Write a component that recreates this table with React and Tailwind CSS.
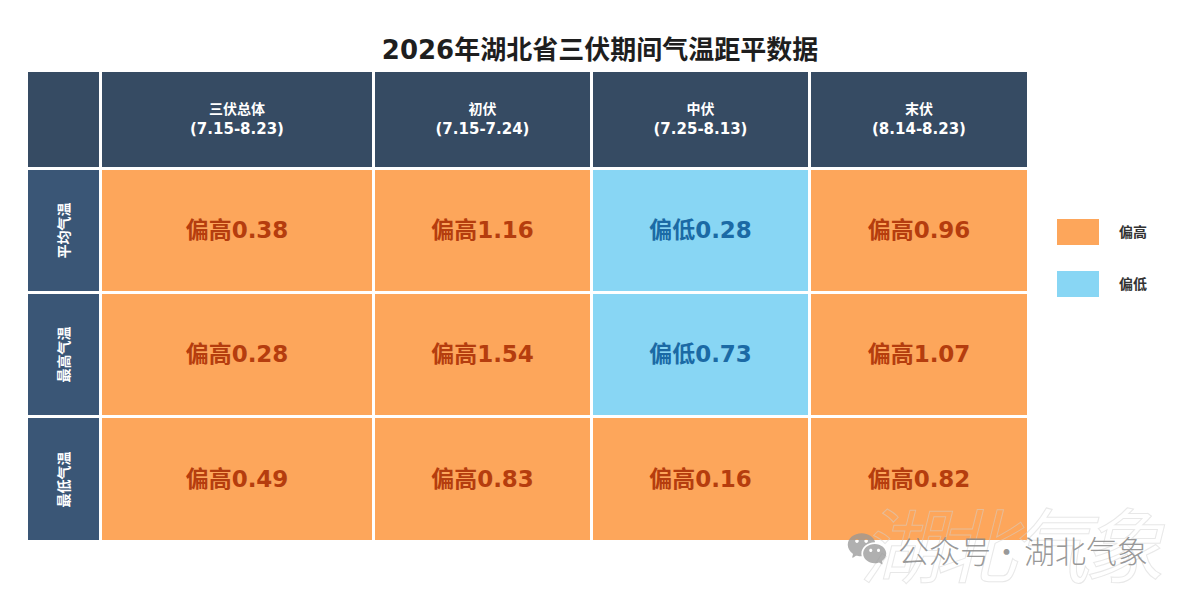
import React from "react";
import { RiWechatFill } from "react-icons/ri";

const columns = [
  { name: "三伏总体", range: "(7.15-8.23)" },
  { name: "初伏", range: "(7.15-7.24)" },
  { name: "中伏", range: "(7.25-8.13)" },
  { name: "末伏", range: "(8.14-8.23)" },
];

// high = 偏高, low = 偏低
const rows = [
  { label: "平均气温", cells: [["high", "0.38"], ["high", "1.16"], ["low", "0.28"], ["high", "0.96"]] },
  { label: "最高气温", cells: [["high", "0.28"], ["high", "1.54"], ["low", "0.73"], ["high", "1.07"]] },
  { label: "最低气温", cells: [["high", "0.49"], ["high", "0.83"], ["high", "0.16"], ["high", "0.82"]] },
];

const font = { fontFamily: '"DejaVu Sans", "Noto Sans CJK SC", sans-serif' };

const Cell = ({ kind, value }) => {
  const high = kind === "high";
  return (
    <div
      className={`flex items-center justify-center ${high ? "bg-[#fda65b]" : "bg-[#88d6f4]"}`}
    >
      <span
        className={`text-[23px] font-bold ${high ? "text-[#b53d0e]" : "text-[#1b6aa5]"}`}
      >
        {high ? "偏高" : "偏低"}
        {value}
      </span>
    </div>
  );
};

export default function App() {
  return (
    <div className="relative w-[1200px] h-[594px] bg-white overflow-hidden" style={font}>
      <h1 className="pt-[32px] h-[72px] text-center text-[26px] leading-[36px] font-bold text-[#1e1e1e]">
        2026年湖北省三伏期间气温距平数据
      </h1>

      <div className="flex pl-[28px]">
        {/* 表格 */}
        <div className="grid grid-cols-[71px_270px_215px_215px_216px] grid-rows-[95px_121px_121px_122px] gap-[3px]">
          <div className="bg-[#364b63]" />
          {columns.map((c) => (
            <div
              key={c.name}
              className="bg-[#364b63] flex flex-col items-center justify-center text-white font-bold"
            >
              <span className="text-[14px] leading-[19px]">{c.name}</span>
              <span className="text-[15px] leading-[20px]">{c.range}</span>
            </div>
          ))}

          {rows.map((r) => (
            <React.Fragment key={r.label}>
              <div className="bg-[#3a5676] flex items-center justify-center">
                <span className="-rotate-90 whitespace-nowrap text-white text-[14px] font-bold">
                  {r.label}
                </span>
              </div>
              {r.cells.map(([kind, value], i) => (
                <Cell key={i} kind={kind} value={value} />
              ))}
            </React.Fragment>
          ))}
        </div>

        {/* 图例 */}
        <div className="ml-[30px] mt-[147px] flex flex-col gap-[26px]">
          <div className="flex items-center gap-[20px]">
            <div className="w-[42px] h-[26px] bg-[#fda65b]" />
            <span className="text-[14px] font-bold text-[#333]">偏高</span>
          </div>
          <div className="flex items-center gap-[20px]">
            <div className="w-[42px] h-[26px] bg-[#88d6f4]" />
            <span className="text-[14px] font-bold text-[#333]">偏低</span>
          </div>
        </div>
      </div>

      {/* 水印 */}
      <div className="absolute left-[860px] top-[508px] text-[82px] leading-none text-transparent [-webkit-text-stroke:1px_rgba(210,210,210,0.5)] whitespace-nowrap tracking-[-8px] italic select-none">
        湖北气象
      </div>
      <div
        className="absolute left-[846px] top-[528px] flex items-center text-[31px] leading-none whitespace-nowrap text-[rgba(135,135,135,0.85)]"
        style={{ fontFamily: '"Noto Sans CJK SC", sans-serif', fontWeight: 300 }}
      >
        <RiWechatFill className="w-[42px] h-[42px] mr-[10px] text-[rgba(150,150,150,0.75)]" />
        <span>公众号</span>
        <span>·</span>
        <span className="ml-[2px]">湖北气象</span>
      </div>
    </div>
  );
}
